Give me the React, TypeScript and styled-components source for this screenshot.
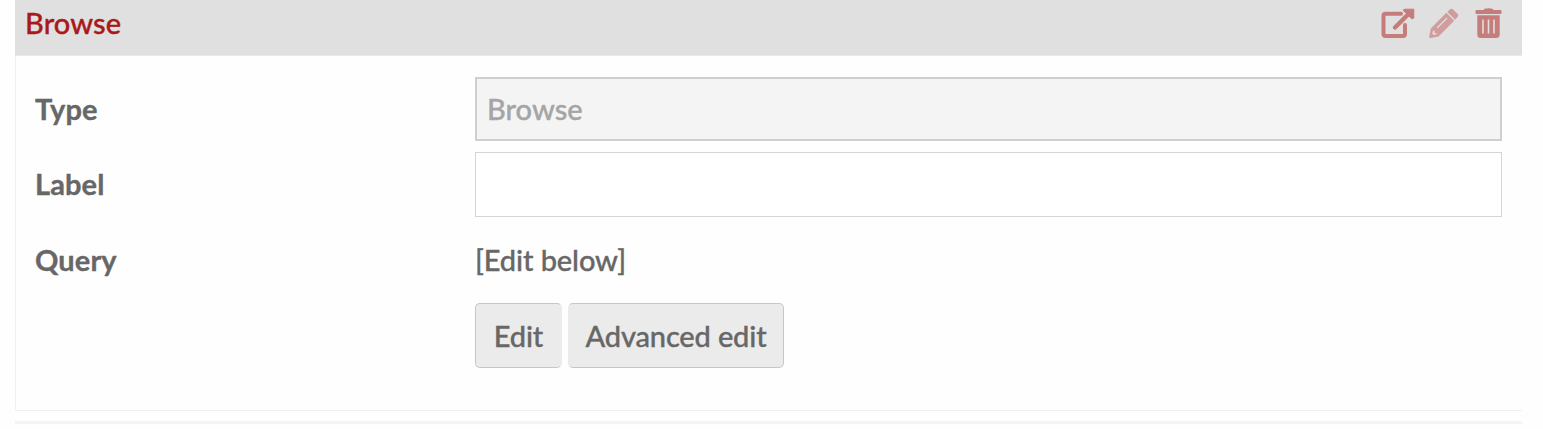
import React from 'react';
import styled, { createGlobalStyle } from 'styled-components';

const GlobalStyle = createGlobalStyle`
  *{box-sizing:border-box}
  body{margin:0;background:#fefefe;color:#676767;font:500 29px/1 Lato,sans-serif;overflow:hidden;-webkit-text-stroke:.35px currentColor}
`;
const Page = styled.main`padding:0 21px 0 15px;height:429px;`;
const Panel = styled.section`height:411px;border:1px solid #f0f0f0;border-top:0;border-right:0;`;
const Header = styled.header`
  height:56px;background:#e0e0e0;border-bottom:1px solid #eaeaea;color:#a91919;
  display:flex;justify-content:space-between;padding:0 20px 0 10px;margin-left:-1px;
`;
const Title = styled.h2`margin:0;font:500 29px/46px Lato,sans-serif;letter-spacing:.1px;`;
const Actions = styled.div`display:flex;gap:14px;padding-top:8px;`;
const Icon = styled.svg<{ $dim?: boolean }>`display:block;height:31px;color:${p => (p.$dim ? '#d09c9c' : '#c77c7c')};`;
const Row = styled.div`display:grid;grid-template-columns:440px 1fr;align-items:start;`;
const Fields = styled.div`display:grid;grid-template-rows:64px 65px 64px 65px;row-gap:11px;padding:21px 20px 0 19px;`;
const Label = styled.div`font-weight:700;line-height:64px;letter-spacing:.1px;`;
const Input = styled.input`
  display:block;width:100%;height:65px;border:1px solid #d5d5d5;border-radius:0;background:#fff;padding:0 11px;font:inherit;outline:0;
  &:disabled{height:64px;border:2px solid #cfcfcf;background:#f4f4f4;color:#a5a5a5;padding:0 10px 2px;}
`;
const Value = styled.div`line-height:64px;letter-spacing:-.1px;`;
const Buttons = styled.div`display:flex;gap:6px;`;
const Button = styled.button<{ $width: number; $open?: 'left' | 'right' }>`
  width:${p => p.$width}px;height:65px;border:1px solid #c6c6c6;border-radius:5px;
  ${p => p.$open && `border-${p.$open}-color:#ebebeb;`}
  background:#ebebeb;color:#676767;font:inherit;letter-spacing:-.15px;padding:0 0 1px;
`;
const Next = styled.div`height:3px;background:#f4f4f4;margin-top:10px;`;

const OpenIcon = () => (
  <Icon viewBox="0 0 34 31" width="34">
    <path d="M20 5.800H4.500Q2.500 5.800 2.500 7.800v18.200q0 2 2 2H22q2 0 2-2V17" fill="none" stroke="currentColor" strokeWidth="4" strokeLinecap="round" />
    <path d="M14 19.500 28 5.500" fill="none" stroke="currentColor" strokeWidth="4.500" strokeLinecap="round" />
    <path d="M24 1.200h8.800v8.800l-2 .8-8.800-8.600z" fill="currentColor" stroke="currentColor" strokeLinejoin="round" />
  </Icon>
);

const PencilIcon = () => (
  <Icon $dim viewBox="0 0 32 31" width="32">
    <path fill="currentColor" fillRule="evenodd" d="M1.500 30Q0 30 .2 28.800L1.800 20.500 17.300 4.800 25.200 12.700 9.500 28.400zM3.900 22.800 3.300 25.500 4.800 27 7.500 26.300V24.900H5.400V22.600zM7.600 19.400 8.600 20.200 18.500 10.400 17.700 9.600z" />
    <path fill="currentColor" d="M18.300 3.900 20.800 1.400q1.700-1.500 3.300 0l4.400 4.400q1.500 1.600 0 3.300L26.100 11.700z" />
  </Icon>
);

const TrashIcon = () => (
  <Icon viewBox="0 0 27 31" width="27">
    <path fill="currentColor" d="M1.500 2H8.500l1-1.300q4-1 8 0l1 1.300H25.500q1 0 1 1v2q0 1-1 1H1.500q-1 0-1-1V3q0-1 1-1z" />
    <path fill="currentColor" fillRule="evenodd" d="M2.300 7.200h22.400v19.300q0 3.500-3.500 3.500H5.800q-3.500 0-3.500-3.500zM7.200 11.500v14h1.600v-14zM12.700 11.500v14h1.600v-14zM18.200 11.500v14h1.600v-14z" />
  </Icon>
);

export default function App() {
  return (
    <>
      <GlobalStyle />
      <Page>
        <Panel>
          <Header>
            <Title>Browse</Title>
            <Actions><OpenIcon /><PencilIcon /><TrashIcon /></Actions>
          </Header>
          <Fields>
            <Row><Label>Type</Label><Input disabled defaultValue="Browse" /></Row>
            <Row><Label>Label</Label><Input /></Row>
            <Row><Label>Query</Label><Value>[Edit below]</Value></Row>
            <Row>
              <span />
              <Buttons>
                <Button $width={87} $open="right">Edit</Button>
                <Button $width={216} $open="left">Advanced edit</Button>
              </Buttons>
            </Row>
          </Fields>
        </Panel>
        <Next />
      </Page>
    </>
  );
}
